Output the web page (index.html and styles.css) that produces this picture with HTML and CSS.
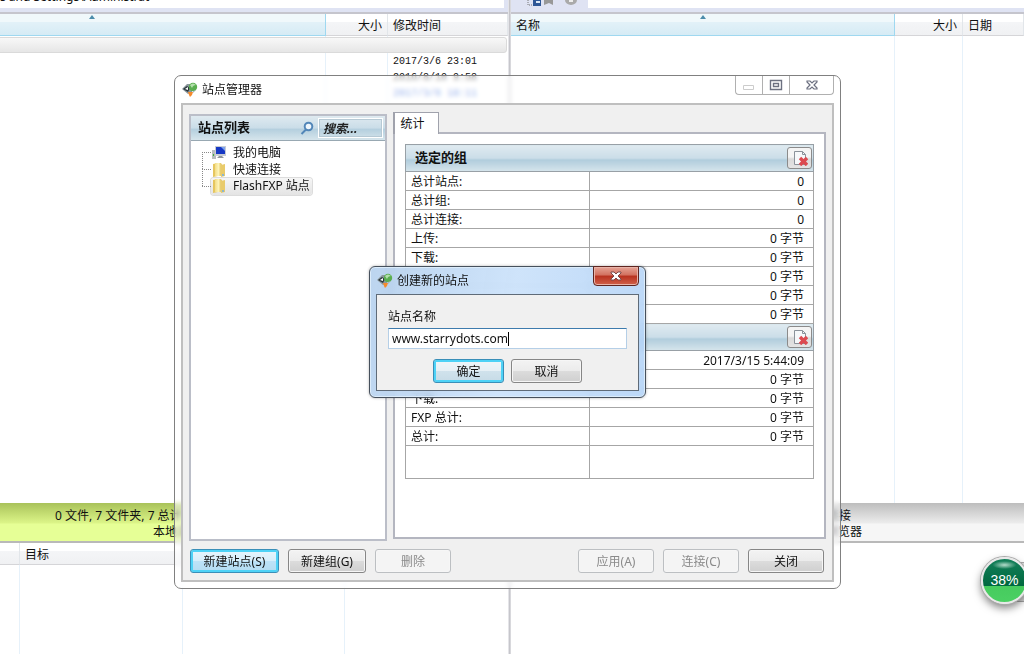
FILE: index.html
```html
<!DOCTYPE html>
<html lang="zh-CN">
<head>
<meta charset="utf-8">
<title>站点管理器</title>
<link rel="stylesheet" href="styles.css">
</head>
<body>
<svg class="defs" aria-hidden="true">
  <defs>
    <linearGradient id="fold" x1="0" x2="1"><stop offset="0" stop-color="#f3dd86"/><stop offset=".5" stop-color="#fdf3b8"/><stop offset="1" stop-color="#d9b33f"/></linearGradient>
    <symbol id="app" viewBox="0 0 16 16">
      <path d="M0 7 5 2h6l-1 8-4 2z" fill="#8b979c"/>
      <path d="M1 7l4-3 3 2-2 4z" fill="#2a363c"/><path d="M3 7l3-2v3z" fill="#fff"/>
      <circle cx="11" cy="5" r="4.200" fill="#5aae50"/>
      <path d="M8 3q3-3 6 0-3 0-4 3z" fill="#b4dfac"/>
      <path d="M6 10h5l-1 3-2 2-1-2z" fill="#f58a2c"/><path d="M11 9l3-1-3 3z" fill="#a9b4b8"/>
    </symbol>
    <symbol id="folder" viewBox="0 0 16 16">
      <path d="M2 2l5-1v13l-5 1z" fill="#e6c65f"/><path d="M4 1h6l1 2v11H4z" fill="url(#fold)"/>
      <path d="M10 3l4-1v12l-4 1z" fill="#e9cb6b"/><path d="M11 12h2v2h-2z" fill="#8ab6d0"/>
    </symbol>
    <symbol id="clear" viewBox="0 0 16 16">
      <path d="M2.500 1.500h8l3 3v10h-11z" fill="#f6f8fa" stroke="#8b929a"/><path d="M10.500 1.500v3h3" fill="none" stroke="#8b929a"/>
      <path d="M8 8l7 7M15 8l-7 7" stroke="#dc4a50" stroke-width="3.400"/>
    </symbol>
  </defs>
</svg>

<main class="desk">
  <section class="pane">
    <div class="toolbar"><div class="path">s and Settings\Administrat</div></div>
    <div class="cols cols-left">
      <div class="col sorted"><svg class="arrow" viewBox="0 0 6 4"><path d="M0 4 3 0l3 4z"/></svg></div>
      <div class="col num">大小</div>
      <div class="col">修改时间</div>
    </div>
    <div class="list cols-left">
      <div class="selrow"></div>
      <div class="cell"></div><div class="cell"></div>
      <div class="cell dates"><p>2017/3/6 23:01</p><p>2016/8/10 9:58</p><p>2017/3/6 18:11</p></div>
    </div>
    <div class="status green"><p class="files">0 文件, 7 文件夹, 7 总计</p><p class="local">本地浏览</p></div>
    <div class="cols cols-queue"><div class="col"></div><div class="col">目标</div><div class="col"></div><div class="col"></div></div>
    <div class="queue cols-queue"><div class="cell"></div><div class="cell"></div><div class="cell"></div><div class="cell"></div></div>
  </section>
  <div class="divider"></div>
  <section class="pane">
    <div class="toolbar tools">
      <svg class="toolicons" viewBox="0 0 60 8"><path d="M1 0v5h4" fill="none" stroke="#777" stroke-dasharray="1 1"/><path d="M6 0h8v6H6z" fill="#2e5796"/><path d="M9 1h4v2H9z" fill="#dce8f5"/><path d="M17 0h9v5l-4-2-5 2z" fill="#989898"/><path d="M38 0a6 5 0 0 0 12 0" fill="#aaa"/><path d="M42 1h4" stroke="#eee" stroke-width="2"/></svg>
      <div class="path"></div>
    </div>
    <div class="cols cols-right">
      <div class="col sorted">名称<svg class="arrow" viewBox="0 0 6 4"><path d="M0 4 3 0l3 4z"/></svg></div>
      <div class="col num">大小</div>
      <div class="col">日期</div>
    </div>
    <div class="list cols-right"><div class="cell"></div><div class="cell"></div><div class="cell"></div></div>
    <div class="status gray"><p class="link">连接</p><p class="remote">浏览器</p></div>
    <div class="log"></div>
  </section>
</main>

<section class="win manager">
  <header class="title"><svg class="icon"><use href="#app"/></svg><h1>站点管理器</h1></header>
  <div class="winbtns">
    <button aria-label="最小化" disabled><svg viewBox="0 0 14 12"><path d="M1.500 6.500h10v4h-10z" fill="#fff" stroke="#ccc"/></svg></button>
    <button aria-label="最大化"><svg viewBox="0 0 14 12"><path d="M1.500 1.500h11v9h-11zM4.500 4.500h5v3h-5z" fill="none" stroke="#6c7080" stroke-width="1.400"/></svg></button>
    <button aria-label="关闭"><svg viewBox="0 0 14 12"><path d="M2 2h3l2 2 2-2h3v1L9 6l3 3v1H9L7 8l-2 2H2V9l3-3-3-3z" fill="#fff" stroke="#6c7080" stroke-width="1.200"/></svg></button>
  </div>
  <div class="client">
    <div class="columns">
      <aside class="sites">
        <div class="sitehead"><h2>站点列表</h2>
          <svg class="lens" viewBox="0 0 14 14"><circle cx="8.500" cy="5.500" r="3.800"/><path d="M6 8.500 1.500 13"/></svg>
          <input type="text" class="search" placeholder="搜索..." aria-label="搜索"></div>
        <ul class="tree">
          <li><svg class="icon" viewBox="0 0 16 16"><path d="M1 5h4v9H1z" fill="#b8bcc0"/><path d="M2 9h1v2H2z" fill="#3dad38"/><path d="M4 1h11v10H4z" fill="#c8ccd4"/><path d="M5 2h9v7H5z" fill="#1638c4"/><path d="M10 2h4v4z" fill="#7fa4ee"/><path d="M8 11h3l2 2H6z" fill="#8f969c"/></svg><span>我的电脑</span></li>
          <li><svg class="icon"><use href="#folder"/></svg><span>快速连接</span></li>
          <li><div class="picked"><svg class="icon"><use href="#folder"/></svg><span>FlashFXP 站点</span></div></li>
        </ul>
      </aside>
      <div class="tabs">
        <button class="tab">统计</button>
        <div class="sheet">
          <table>
            <colgroup><col class="name"><col></colgroup>
            <tbody>
            <tr class="group"><th colspan="2"><div><span>选定的组</span><button aria-label="清除"><svg class="icon"><use href="#clear"/></svg></button></div></th></tr>
            <tr><td>总计站点:</td><td>0</td></tr>
            <tr><td>总计组:</td><td>0</td></tr>
            <tr><td>总计连接:</td><td>0</td></tr>
            <tr><td>上传:</td><td>0 字节</td></tr>
            <tr><td>下载:</td><td>0 字节</td></tr>
            <tr><td></td><td>0 字节</td></tr>
            <tr><td></td><td>0 字节</td></tr>
            <tr><td></td><td>0 字节</td></tr>
            <tr class="group"><th colspan="2"><div><span></span><button aria-label="清除"><svg class="icon"><use href="#clear"/></svg></button></div></th></tr>
            <tr><td></td><td>2017/3/15 5:44:09</td></tr>
            <tr><td></td><td>0 字节</td></tr>
            <tr><td>下载:</td><td>0 字节</td></tr>
            <tr><td>FXP 总计:</td><td>0 字节</td></tr>
            <tr><td>总计:</td><td>0 字节</td></tr>
            <tr class="rest"><td></td><td></td></tr>
            </tbody>
          </table>
        </div>
      </div>
    </div>
    <footer class="actions">
      <button class="btn wide focus blue">新建站点(S)</button>
      <button class="btn mid">新建组(G)</button>
      <button class="btn" disabled>删除</button>
      <span class="gap"></span>
      <button class="btn" disabled>应用(A)</button>
      <button class="btn" disabled>连接(C)</button>
      <button class="btn">关闭</button>
    </footer>
  </div>
</section>

<section class="win dialog">
  <header class="title"><svg class="icon"><use href="#app"/></svg><h1>创建新的站点</h1></header>
  <button class="close" aria-label="关闭"><svg viewBox="0 0 14 12"><path d="M2 2h3l2 2 2-2h3v1L9 6l3 3v1H9L7 8l-2 2H2V9l3-3-3-3z" fill="#fff" stroke="#7b4a4a"/></svg></button>
  <form class="form">
    <label for="site">站点名称</label>
    <div class="field"><input id="site" type="text" value="www.starrydots.com"><i class="caret"></i></div>
    <div class="formbtns"><button type="button" class="btn focus pale">确定</button><button type="button" class="btn">取消</button></div>
  </form>
</section>

<div class="ball"><div class="disc">38%</div></div>
</body>
</html>
```
FILE: styles.css
```css
* { box-sizing: border-box; }
body {
  margin: 0;
  height: 100vh;
  overflow: hidden;
  position: relative;
  background: #fff;
  color: #111;
  font: 12px/16px "Noto Sans", "Noto Sans CJK SC", sans-serif;
}
h1, h2, p, ul { margin: 0; padding: 0; font: inherit; }
button, input { font: inherit; color: inherit; margin: 0; padding: 0; }
.defs { position: absolute; width: 0; height: 0; }
.icon { width: 16px; height: 16px; flex: none; display: block; }

/* file panes */
.desk { display: grid; grid-template-columns: 508fr 3px 513fr; height: 100%; }
.pane { display: flex; flex-direction: column; min-width: 0; }
.divider { background: #c6c6cb; border-left: 1px solid #e4e4e8; border-right: 1px solid #d8d8dc; }
.toolbar {
  flex: none;
  height: 14px;
  display: flex;
  background: #dfe3f3;
  border-bottom: 2px solid #c5c5cd;
}
.toolbar .path {
  flex: 1;
  height: 8px;
  margin-right: 4px;
  overflow: hidden;
  display: flex;
  align-items: flex-end;
  padding-bottom: 3px;
  background: #fff;
  white-space: nowrap;
}
.tools .path { margin-right: 0; }
.toolicons { width: 60px; height: 8px; margin: 0 1px 0 16px; }
.cols, .list, .queue { display: grid; }
.cols-left { grid-template-columns: 326fr 62fr 120fr; }
.cols-right { grid-template-columns: 384fr 68fr 61fr; }
.cols-queue { grid-template-columns: 20fr 163fr 162fr 163fr; }
.cols { flex: none; height: 22px; }
.col {
  position: relative;
  padding: 4px 5px 0;
  border-right: 1px solid #e2e6ea;
  border-bottom: 1px solid #d5d5d8;
  background: linear-gradient(#fff 40%, #f4f5f7 40%, #f0f1f3);
}
.num { text-align: right; }
.sorted {
  border-color: #9fd8f0;
  background: linear-gradient(#f0f8fb 40%, #e2f1f8 40%, #d6ebf5);
}
.arrow { position: absolute; left: 189px; top: 1px; width: 6px; height: 4px; fill: #4b8cab; }
.cols-left .arrow { left: 89px; }
.list { flex: 467; position: relative; }
.cell { border-right: 1px solid #e6f1fa; }
.cell:last-child { border-right: 0; }
.selrow {
  position: absolute;
  left: -3px; right: 1px; top: 1px;
  height: 16px;
  border: 1px solid #dadada;
  border-radius: 3px;
  background: linear-gradient(#f8f8f8, #e6e6e6);
}
.dates { padding: 18px 5px; font: 10px/16px "Liberation Mono", monospace; white-space: nowrap; }
.dates p:last-child { color: #2a62d8; }
.status { flex: none; height: 40px; padding-top: 5px; border-bottom: 2px solid #b9b9b9; }
.status p { white-space: nowrap; overflow: hidden; }
.green { background: linear-gradient(#a9c25a, #dcf588 20px, #e6ff96 21px); }
.gray { background: linear-gradient(#bdbdbd, #ececec 20px, #f6f6f6 21px); text-align: right; }
.files { padding-left: 55px; }
.local { padding-left: 153px; }
.link { padding-right: 173px; }
.remote { padding-right: 162px; }
.queue { flex: 89; }
.log { flex: 111; }

/* window frames */
.win { position: absolute; display: flex; flex-direction: column; }
.title { display: flex; align-items: center; gap: 4px; }
.manager {
  left: 174px; top: 75px;
  width: 667px; height: 514px;
  padding: 0 6px 6px;
  border: 1px solid #808080;
  border-radius: 7px;
  background: rgba(255, 255, 255, .5);
  backdrop-filter: blur(2px);
}
.manager .title { flex: none; height: 27px; padding-left: 1px; }
.winbtns { position: absolute; right: 6px; top: 0; display: flex; }
.winbtns button {
  width: 27px; height: 19px;
  border: 1px solid #b0b0b0;
  border-width: 0 0 1px 1px;
  background: #fff;
}
.winbtns button:first-child { border-radius: 0 0 0 4px; }
.winbtns button:last-child { width: 45px; border-right-width: 1px; border-radius: 0 0 4px 0; }
.winbtns svg { display: block; width: 14px; height: 12px; margin: 0 auto; }
.client {
  flex: 1;
  display: flex;
  flex-direction: column;
  padding: 7px 6px;
  border: 2px solid #bfbfbf;
  background: #f0f0f0;
}
.columns { flex: 1; display: flex; gap: 6px; }
.sites { width: 198px; margin: 2px 0 0; border: 2px solid #bbbec8; background: #fff; }
.sitehead {
  display: flex;
  align-items: center;
  height: 25px;
  padding: 0 2px 0 7px;
  border-bottom: 1px solid #98a8b2;
  background: linear-gradient(#dfeaf0, #cadde8 50%, #b4cfde 55%, #d6e5ec);
}
h2, th span { font-size: 13px; font-weight: bold; line-height: 14px; padding-bottom: 2px; }
.lens { width: 14px; height: 14px; margin: 0 4px 0 auto; fill: #eef6fc; stroke: #5286b8; stroke-width: 2; }
.search {
  width: 65px; height: 20px;
  padding: 0 4px;
  border: 1px solid #fff;
  outline: 1px solid #b6c9d4;
  outline-offset: -2px;
  background: transparent;
  font-style: italic;
  font-weight: bold;
}
.search::placeholder { color: #222; opacity: 1; }
.tree { list-style: none; padding: 3px 0 0 11px; }
.tree li { display: flex; align-items: center; height: 17px; position: relative; padding-left: 9px; }
.tree li::before { content: ""; position: absolute; left: 0; top: 8px; width: 9px; border-top: 1px dotted #888; }
.tree li::after { content: ""; position: absolute; left: 0; top: 8px; height: 17px; border-left: 1px dotted #888; }
.tree li:last-child::after { height: 0; }
.tree span { padding-left: 6px; white-space: nowrap; }
.picked {
  display: flex;
  height: 17px;
  padding-right: 2px;
  border-radius: 3px;
  background: linear-gradient(#f6f6f6, #e4e4e4);
  box-shadow: 0 0 0 1px #dcdcdc;
}
.tabs { flex: 1; display: flex; flex-direction: column; padding-bottom: 2px; }
.tab {
  position: relative;
  z-index: 1;
  align-self: flex-start;
  width: 46px; height: 22px;
  margin-bottom: -2px;
  padding-right: 8px;
  border: 1px solid #a0a2ac;
  border-left-width: 2px;
  border-bottom: 0;
  background: #fff;
}
.sheet { flex: 1; padding: 10px 10px 0; border: 2px solid #b4b6c0; background: #fff; }
table { width: 100%; table-layout: fixed; border-collapse: collapse; border: 1px solid #a0a0a0; }
.name { width: 45%; }
td { height: 19px; padding: 2px 9px 0 5px; border: 1px solid #a6a6a6; line-height: 16px; }
td + td { text-align: right; }
.rest td { height: 33px; }
th { height: 27px; padding: 0; border: 1px solid #98a0a6; text-align: left; background: linear-gradient(#dfeaf0, #cadde8 50%, #b0ccdc 55%, #d6e5ec); }
th div { display: flex; align-items: center; justify-content: space-between; padding: 0 1px 0 9px; }
th button {
  display: grid;
  place-items: center end;
  width: 25px; height: 22px;
  padding-right: 3px;
  border: 1px solid #8b8b8b;
  border-radius: 3px;
  background: linear-gradient(#f4f4f4 45%, #dadada 55%, #e4e4e4);
}
.actions { display: flex; gap: 9px; padding: 8px 2px 0 1px; }
.gap { flex: 1; }
.btn {
  width: 76px; height: 24px;
  padding-top: 1px;
  border: 1px solid #868686;
  border-radius: 3px;
  background: linear-gradient(#f3f3f3, #ebebeb 50%, #dcdcdc 50%, #cfcfcf);
  box-shadow: inset 0 0 0 1px #f6f6f6;
  line-height: 20px;
}
.btn:disabled { color: #8a8a8a; border-color: #bcbfc2; background: #f4f4f4; }
.wide { width: 89px; }
.mid { width: 78px; }
.focus { border-color: #3a8fb8; box-shadow: inset 0 0 0 2px #4ed2f6; }
.blue { background: linear-gradient(#e8f5fc, #d6eefb 50%, #bde3f8 50%, #b4dcf2); }
.pale { background: linear-gradient(#f0f6f9, #e6f0f5 50%, #d0e2ec 50%, #c6dbe6); }

/* dialog */
.dialog {
  left: 369px; top: 266px;
  width: 277px; height: 132px;
  padding: 0 6px 6px;
  border: 1px solid #46505c;
  border-radius: 6px;
  background: linear-gradient(100deg, rgba(176, 205, 236, .85), rgba(200, 224, 250, .88) 50%, rgba(178, 210, 246, .88));
  backdrop-filter: blur(3px);
  box-shadow: inset 0 0 0 1px #dcecfa, 0 0 3px rgba(0, 0, 0, .3);
}
.dialog .title { flex: none; height: 27px; padding-left: 1px; }
.close {
  position: absolute;
  right: 6px; top: -1px;
  width: 46px; height: 20px;
  border: 1px solid #5e2520;
  border-radius: 0 0 4px 4px;
  background: linear-gradient(#e6a496, #d2705f 45%, #b8311f 50%, #d0614a);
  box-shadow: inset 0 0 0 1px #e9b3a8;
}
.close svg { display: block; width: 14px; height: 12px; margin: 0 auto; }
.form { flex: 1; display: flex; flex-direction: column; padding: 14px 11px 0; border: 1px solid #5f6b78; background: #f0f0f0; }
.field { position: relative; margin-top: 3px; }
.field input {
  display: block;
  width: 100%; height: 21px;
  padding: 0 3px;
  border: 1px solid #b5cfe7;
  border-top-color: #3d7bad;
  background: #fff;
}
.caret { position: absolute; left: 120px; top: 4px; height: 14px; border-left: 1px solid #000; }
.formbtns { display: flex; justify-content: center; gap: 7px; margin-top: 10px; }
.formbtns .btn { width: 71px; }

/* progress ball */
.ball { position: absolute; right: -4px; top: 557px; }
.ball::before {
  content: "";
  position: absolute;
  right: 0; top: 5px;
  width: 20px; height: 38px;
  border: 1px solid #aaa;
  background: #ddd;
}
.disc {
  position: relative;
  width: 47px; height: 47px;
  border: 2px solid #e8e8e8;
  border-radius: 50%;
  background: radial-gradient(ellipse 12px 4px at 50% 6px, #b4dccb, transparent), linear-gradient(#14805a, #00683f 27px, #46cb5e 27px, #4bd063);
  box-shadow: 0 0 0 1px #aaa, 0 4px 8px rgba(0, 0, 0, .5);
  color: #fff;
  font: 14px/42px "Liberation Sans", sans-serif;
  text-align: center;
}
```
